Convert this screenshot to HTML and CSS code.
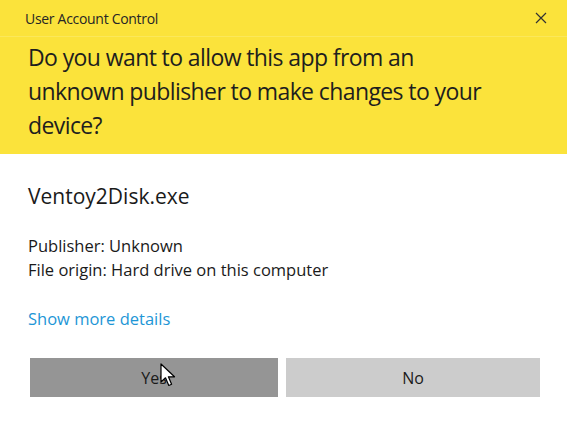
FILE: index.html
```html
<!DOCTYPE html>
<html>
<head>
<meta charset="utf-8">
<link rel="stylesheet" href="styles.css">
</head>
<body>
<div class="dialog">
  <div class="header">
    <div class="titlebar">
      <span class="title">User Account Control</span>
      <svg class="close" width="12" height="12" viewBox="0 0 12 12"><path d="M1 1L11 11M11 1L1 11" stroke="#333" stroke-width="1.2" fill="none"/></svg>
    </div>
    <div class="question">Do you want to allow this app from an unknown publisher to make changes to your device?</div>
  </div>
  <div class="body">
    <div class="appname">Ventoy2Disk.exe</div>
    <div class="info">
      <div>Publisher: Unknown</div>
      <div>File origin: Hard drive on this computer</div>
    </div>
    <div class="more">Show more details</div>
    <div class="buttons">
      <div class="btn yes">Yes
        <svg class="cursor" width="16" height="26" viewBox="0 0 16 26"><path d="M1 1L1 19L5.5 14.8L8.8 22.5L11.6 21.3L8.4 13.8L14.5 13.8Z" fill="#fff" stroke="#000" stroke-width="1.2" stroke-linejoin="round"/></svg>
      </div>
      <div class="btn no">No</div>
    </div>
  </div>
</div>
</body>
</html>
```
FILE: styles.css
```css
html, body {
  margin: 0;
  padding: 0;
  background: #ffffff;
}
body {
  width: 567px;
  height: 424px;
  overflow: hidden;
  font-family: "Open Sans", "Noto Sans", sans-serif;
  color: #1a1a1a;
}
.dialog {
  width: 567px;
  height: 424px;
  display: flex;
  flex-direction: column;
}
.header {
  background: #fbe33b;
  height: 154px;
  box-sizing: border-box;
}
.titlebar {
  height: 36px;
  display: flex;
  align-items: center;
  justify-content: space-between;
  padding: 0 20px 0 25px;
  border-bottom: 1px solid #fbe85a;
}
.title {
  font-size: 14px;
  color: #262626;
  letter-spacing: -0.3px;
}
.close {
  display: block;
}
.question {
  width: 470px;
  padding: 3px 0 0 28px;
  font-size: 23px;
  line-height: 34px;
  color: #1e1e1e;
  letter-spacing: -0.6px;
}
.body {
  padding: 0 27px 0 28px;
  display: flex;
  flex-direction: column;
}
.appname {
  margin-top: 28px;
  font-size: 21px;
  line-height: 28px;
}
.info {
  margin-top: 24px;
  font-size: 16.5px;
  line-height: 24px;
}
.more {
  margin-top: 27px;
  font-size: 16.5px;
  line-height: 20px;
  color: #1e96d6;
}
.buttons {
  margin-top: 29px;
  display: flex;
  gap: 8px;
  padding-left: 2px;
}
.btn {
  height: 39px;
  display: flex;
  align-items: center;
  justify-content: center;
  font-size: 16px;
  color: #1a1a1a;
}
.yes {
  width: 248px;
  background: #959595;
  position: relative;
}
.no {
  width: 254px;
  background: #cccccc;
}
.cursor {
  position: absolute;
  left: 130px;
  top: 5px;
}
```
